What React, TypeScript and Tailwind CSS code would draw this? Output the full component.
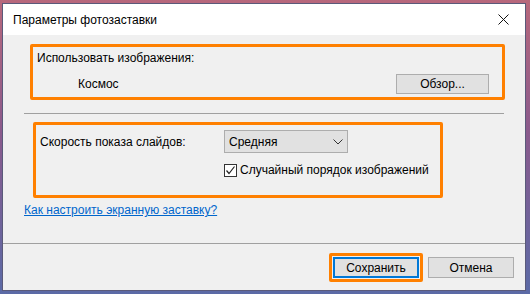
import React from "react";

const font = { fontFamily: '"Liberation Sans", Arial, sans-serif' };

function Button({ label, className = "" }: { label: string; className?: string }) {
  return (
    <div
      className={`flex items-center justify-center bg-[#e1e1e1] border border-[#adadad] text-[12px] text-black ${className}`}
    >
      {label}
    </div>
  );
}

export default function App() {
  return (
    <div
      className="w-[530px] h-[294px] overflow-hidden pl-[2px] pt-[3px] bg-[linear-gradient(180deg,#b8687c_0%,#8a5a8c_45%,#5b6aa6_100%)]"
      style={font}
    >
      <div className="w-[524px] h-[288px] border border-[#5a5a7a] flex flex-col bg-[#f0f0f0] whitespace-nowrap">
        {/* title bar */}
        <div className="h-[31px] bg-white flex items-center justify-between pl-[10px] pr-[16px]">
          <span className="text-[12px] text-black">Параметры фотозаставки</span>
          <svg width="11" height="11" viewBox="0 0 11 11">
            <path d="M0.5 0.5 L10.5 10.5 M10.5 0.5 L0.5 10.5" stroke="#111" strokeWidth="1" />
          </svg>
        </div>

        {/* body */}
        <div className="flex flex-col flex-1">
          <div className="ml-[27px] mt-[9px] w-[475px] h-[56px] border-[3px] border-[#ff8000] rounded-[2px] flex flex-col">
            <div className="pl-[4px] pt-[3px] text-[12px] text-black leading-[16px]">
              Использовать изображения:
            </div>
            <div className="flex items-center justify-between mt-[8px] pl-[45px] pr-[13px]">
              <span className="text-[12px] text-black">Космос</span>
              <Button label="Обзор..." className="w-[93px] h-[20px]" />
            </div>
          </div>

          <div className="ml-[21px] mt-[13px] w-[480px] h-px bg-[#a0a0a0]" />

          <div className="ml-[30px] mt-[8px] w-[410px] h-[76px] border-[3px] border-[#ff8000] rounded-[2px] flex flex-col">
            <div className="flex items-center pt-[5px]">
              <span className="w-[188px] pl-[4px] text-[12px] text-black">Скорость показа слайдов:</span>
              <div className="w-[124px] h-[23px] bg-[#e1e1e1] border border-[#adadad] flex items-center justify-between pl-[4px] pr-[4px] text-[12px] text-black">
                <span>Средняя</span>
                <svg width="10" height="6" viewBox="0 0 10 6">
                  <path d="M0.5 0.5 L5 5 L9.5 0.5" fill="none" stroke="#333" strokeWidth="1" />
                </svg>
              </div>
            </div>
            <div className="flex items-center ml-[188px] mt-[8px]">
              <div className="w-[13px] h-[13px] bg-white border border-[#333] flex items-center justify-center">
                <svg width="11" height="11" viewBox="0 0 11 11">
                  <path d="M1.5 5.5 L4 8.5 L9.5 1.5" fill="none" stroke="#222" strokeWidth="1.2" />
                </svg>
              </div>
              <span className="ml-[3px] text-[12px] text-black">Случайный порядок изображений</span>
            </div>
          </div>

          <div className="ml-[21px] mt-[4px] text-[12px] text-[#0066cc] underline leading-[16px] self-start">
            Как настроить экранную заставку?
          </div>

          <div className="mt-[25px] h-px bg-[#a0a0a0]" />

          <div className="flex justify-end items-center gap-[5px] pr-[11px] pt-[9px]">
            <div className="border-[3px] border-[#ff8000] p-px rounded-[2px]">
              <div className="w-[86px] h-[21px] bg-[#e1e1e1] border-2 border-[#0078d7] flex items-center justify-center text-[12px] text-black">
                Сохранить
              </div>
            </div>
            <Button label="Отмена" className="w-[86px] h-[21px]" />
          </div>
        </div>
      </div>
    </div>
  );
}
